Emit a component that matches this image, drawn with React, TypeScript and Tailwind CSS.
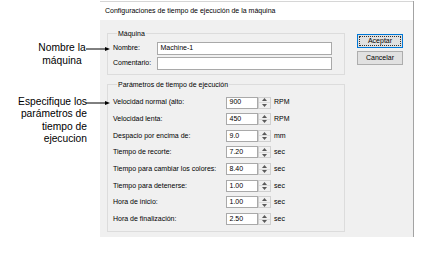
import React from "react";

const rows: { label: string; value: string; unit: string }[] = [
  { label: "Velocidad normal (alto:", value: "900", unit: "RPM" },
  { label: "Velocidad lenta:", value: "450", unit: "RPM" },
  { label: "Despacio por encima de:", value: "9.0", unit: "mm" },
  { label: "Tiempo de recorte:", value: "7.20", unit: "sec" },
  { label: "Tiempo para cambiar los colores:", value: "8.40", unit: "sec" },
  { label: "Tiempo para detenerse:", value: "1.00", unit: "sec" },
  { label: "Hora de inicio:", value: "1.00", unit: "sec" },
  { label: "Hora de finalización:", value: "2.50", unit: "sec" },
];

function Spinner() {
  return (
    <div className="flex h-[12px] w-[13px] flex-col border border-[#cfcfcf] bg-[#f0f0f0]">
      <div className="flex flex-1 items-center justify-center border-b border-[#dcdcdc]">
        <svg width="5" height="3" viewBox="0 0 5 3">
          <polygon points="0,3 2.5,0 5,3" fill="#5a5a5a" />
        </svg>
      </div>
      <div className="flex flex-1 items-center justify-center">
        <svg width="5" height="3" viewBox="0 0 5 3">
          <polygon points="0,0 2.5,3 5,0" fill="#5a5a5a" />
        </svg>
      </div>
    </div>
  );
}

function Arrow() {
  return (
    <svg width="25" height="6" viewBox="0 0 25 6">
      <line x1="0" y1="3" x2="21" y2="3" stroke="#000" strokeWidth="1" />
      <polygon points="19,1 24,3 19,5" fill="#000" />
    </svg>
  );
}

export default function App(): React.JSX.Element {
  return (
    <div className="relative h-[255px] w-[431px] overflow-hidden bg-white font-['Liberation_Sans',Arial,sans-serif] text-black">
      {/* dialog */}
      <div className="ml-[100px] mt-[1px] w-[314px] border-r border-[#a3a3a3]">
        <div className="flex h-[19px] items-center border-t border-[#d6d6d6] bg-white pl-[5px] text-[7px]">
          Configuraciones de tiempo de ejecución de la máquina
        </div>

        <div className="flex h-[217px] bg-[#f0f0f0] text-[7px]">
          <div className="ml-[7px] flex w-[238px] flex-col">
            <fieldset className="mt-[8.5px] border border-[#dcdcdc] pb-[4px] pl-[5px] pr-[12px]">
              <legend className="ml-[4px] px-[1px] leading-[9px]">Máquina</legend>
              <div className="mt-[4.5px] flex flex-col gap-[2px]">
                <div className="flex h-[13px] items-center">
                  <span className="w-[44px]">Nombre:</span>
                  <div className="flex h-[13px] flex-1 items-center border border-[#a9a9a9] bg-white pl-[2.5px]">
                    Machine-1
                  </div>
                </div>
                <div className="flex h-[13px] items-center">
                  <span className="w-[44px]">Comentario:</span>
                  <div className="h-[13px] flex-1 border border-[#a9a9a9] bg-white" />
                </div>
              </div>
            </fieldset>

            <fieldset className="mt-[4.5px] border border-[#dcdcdc] pb-[3.5px] pl-[5px]">
              <legend className="ml-[4px] px-[1px] leading-[9px]">
                Parámetros de tiempo de ejecución
              </legend>
              <div className="mt-[5.7px] flex flex-col">
                {rows.map((r) => (
                  <div key={r.label} className="flex h-[16.67px] items-center">
                    <span className="w-[113px] whitespace-nowrap">{r.label}</span>
                    <div className="flex h-[12px] w-[32px] items-center border border-[#a9a9a9] bg-white pl-[2.5px]">
                      {r.value}
                    </div>
                    <Spinner />
                    <span className="ml-[3px]">{r.unit}</span>
                  </div>
                ))}
              </div>
            </fieldset>
          </div>

          <div className="ml-[12px] mt-[14px] flex w-[46px] flex-col gap-[3px]">
            <button className="flex h-[14px] items-center justify-center border border-[#0078d7] bg-[#e1e1e1] p-[1px]">
              <span className="flex h-full w-full items-center justify-center border border-dotted border-[#333]">
                Aceptar
              </span>
            </button>
            <button className="flex h-[14px] items-center justify-center border border-[#adadad] bg-[#e1e1e1]">
              Cancelar
            </button>
          </div>
        </div>
      </div>

      {/* callouts */}
      <div className="absolute left-[38px] top-[42.25px] w-[48px] text-center text-[10.25px] leading-[12.5px]">
        Nombre la
        <br />
        máquina
      </div>
      <div className="absolute left-[86px] top-[45.5px] flex">
        <Arrow />
      </div>

      <div className="absolute right-[344px] top-[95.75px] whitespace-nowrap text-right text-[10.25px] leading-[12.5px]">
        Especifique los
        <br />
        parámetros de
        <br />
        tiempo de
        <br />
        ejecucion
      </div>
      <div className="absolute left-[86px] top-[100px] flex">
        <Arrow />
      </div>
    </div>
  );
}
